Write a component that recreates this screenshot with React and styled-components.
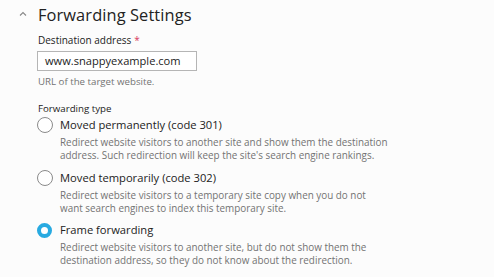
import React from 'react'
import styled, { createGlobalStyle } from 'styled-components'

const GlobalStyle = createGlobalStyle`
  html, body {
    margin: 0;
    padding: 0;
    background: #fcfcfc;
  }
  body {
    font-family: 'Open Sans', 'Noto Sans', sans-serif;
    color: #222;
  }
`

const Page = styled.div`
  width: 494px;
  height: 277px;
  overflow: hidden;
  background: #fcfcfc;
`

const Header = styled.div`
  display: flex;
  align-items: center;
  height: 28px;
  padding-left: 19px;
`

const Chevron = styled.svg`
  width: 8px;
  height: 6px;
  margin-right: 11px;
  margin-top: -1px;
`

const Title = styled.h2`
  margin: 0;
  font-size: 16.4px;
  font-weight: 400;
  color: #222;
  letter-spacing: 0.1px;
`

const Body = styled.div`
  padding-left: 37px;
`

const FieldLabel = styled.div`
  margin-top: 5px;
  font-size: 10px;
  line-height: 14px;
  color: #222;
  padding-left: 1px;
`

const Required = styled.span`
  color: #d7385e;
  margin-left: 3px;
`

const Input = styled.div`
  box-sizing: border-box;
  width: 160px;
  height: 20px;
  margin-top: 4px;
  border: 1px solid #b5b5b5;
  background: #fff;
  padding-left: 7px;
  font-size: 11.1px;
  line-height: 18px;
  color: #222;
`

const Hint = styled.div`
  margin-top: 4px;
  font-size: 9.7px;
  line-height: 14px;
  color: #737373;
  padding-left: 1px;
`

const GroupLabel = styled.div`
  margin-top: 13px;
  font-size: 9.7px;
  line-height: 14px;
  color: #222;
  padding-left: 1px;
`

const Option = styled.div`
  display: grid;
  grid-template-columns: 16px 1fr;
  column-gap: 7px;
  margin-top: ${p => p.$gap}px;
`

const Radio = styled.span`
  box-sizing: border-box;
  width: ${p => (p.$checked ? 15 : 16)}px;
  height: ${p => (p.$checked ? 15 : 16)}px;
  border-radius: 50%;
  border: ${p => (p.$checked ? '4.5px solid #28aae1' : '1px solid #8a8a8a')};
  background: #fff;
  align-self: center;
`

const OptionTitle = styled.div`
  font-size: 11.2px;
  line-height: 18px;
  color: #222;
`

const OptionDesc = styled.div`
  grid-column: 2;
  margin-top: 2px;
  font-size: 9.9px;
  line-height: 13px;
  color: #737373;
`

const options = [
  {
    title: 'Moved permanently (code 301)',
    desc: (
      <>
        Redirect website visitors to another site and show them the destination
        <br />
        address. Such redirection will keep the site's search engine rankings.
      </>
    ),
    gap: 0,
  },
  {
    title: 'Moved temporarily (code 302)',
    desc: (
      <>
        Redirect website visitors to a temporary site copy when you do not
        <br />
        want search engines to index this temporary site.
      </>
    ),
    gap: 7,
  },
  {
    title: 'Frame forwarding',
    desc: (
      <>
        Redirect website visitors to another site, but do not show them the
        <br />
        destination address, so they do not know about the redirection.
      </>
    ),
    checked: true,
    gap: 6,
  },
]

function App() {
  return (
    <Page>
      <GlobalStyle />
      <Header>
        <Chevron viewBox="0 0 8 6">
          <path d="M1 4.5 L4 1.5 L7 4.5" fill="none" stroke="#888" strokeWidth="1.1" />
        </Chevron>
        <Title>Forwarding Settings</Title>
      </Header>
      <Body>
        <FieldLabel>
          Destination address<Required>*</Required>
        </FieldLabel>
        <Input>www.snappyexample.com</Input>
        <Hint>URL of the target website.</Hint>
        <GroupLabel>Forwarding type</GroupLabel>
        {options.map(o => (
          <Option key={o.title} $gap={o.gap}>
            <Radio $checked={o.checked} />
            <OptionTitle>{o.title}</OptionTitle>
            <OptionDesc>{o.desc}</OptionDesc>
          </Option>
        ))}
      </Body>
    </Page>
  )
}

export default App
